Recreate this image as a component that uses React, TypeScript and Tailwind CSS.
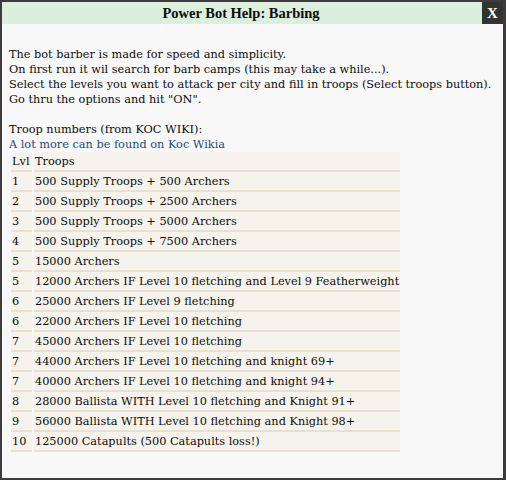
const rows: [string, string][] = [
  ["1", "500 Supply Troops + 500 Archers"],
  ["2", "500 Supply Troops + 2500 Archers"],
  ["3", "500 Supply Troops + 5000 Archers"],
  ["4", "500 Supply Troops + 7500 Archers"],
  ["5", "15000 Archers"],
  ["5", "12000 Archers IF Level 10 fletching and Level 9 Featherweight"],
  ["6", "25000 Archers IF Level 9 fletching"],
  ["6", "22000 Archers IF Level 10 fletching"],
  ["7", "45000 Archers IF Level 10 fletching"],
  ["7", "44000 Archers IF Level 10 fletching and knight 69+"],
  ["7", "40000 Archers IF Level 10 fletching and knight 94+"],
  ["8", "28000 Ballista WITH Level 10 fletching and Knight 91+"],
  ["9", "56000 Ballista WITH Level 10 fletching and Knight 98+"],
  ["10", "125000 Catapults (500 Catapults loss!)"],
];

export default function App() {
  return (
    <div className="w-[506px] h-[480px] bg-[#f8f8f8] border-2 border-r-[3px] border-[#3c3c3c] flex flex-col font-['DejaVu_Serif',serif] text-[11.3px] leading-[15px] text-[#0d0d0d]">
      {/* Title bar */}
      <div className="h-[22px] flex items-center bg-[#dcefdc] shrink-0 font-['Liberation_Serif',serif]">
        <div className="flex-1 text-center font-bold text-[14.5px] pr-[2px]">Power Bot Help: Barbing</div>
        <div className="w-[21px] h-[22px] bg-[#333] text-white font-bold text-[15px] flex items-center justify-center">X</div>
      </div>

      <div className="px-[7px] pt-[23px]">
        The bot barber is made for speed and simplicity.
        <br />
        On first run it wil search for barb camps (this may take a while...).
        <br />
        Select the levels you want to attack per city and fill in troops (Select troops button).
        <br />
        Go thru the options and hit "ON".
        <br />
        <br />
        Troop numbers (from KOC WIKI):
        <br />
        <span className="text-[#1b4c80]">A lot more can be found on Koc Wikia</span>
        <table className="border-separate border-spacing-x-[2px] border-spacing-y-0">
          <tbody>
            <tr>
              <td className="h-[20px] px-[1px] bg-[#f6f3ec] border-b-2 border-[#e8e1d1]">Lvl</td>
              <td className="h-[20px] px-[1px] bg-[#f6f3ec] border-b-2 border-[#e8e1d1]">Troops</td>
            </tr>
            {rows.map(([lvl, troops], i) => (
              <tr key={i}>
                <td className="h-[20px] w-[21px] px-[1px] pt-[1px] bg-[#f6f3ec] border-b-2 border-[#e8e1d1]">{lvl}</td>
                <td className="h-[20px] px-[1px] pt-[1px] bg-[#f6f3ec] border-b-2 border-[#e8e1d1]">{troops}</td>
              </tr>
            ))}
          </tbody>
        </table>
      </div>
    </div>
  );
}
